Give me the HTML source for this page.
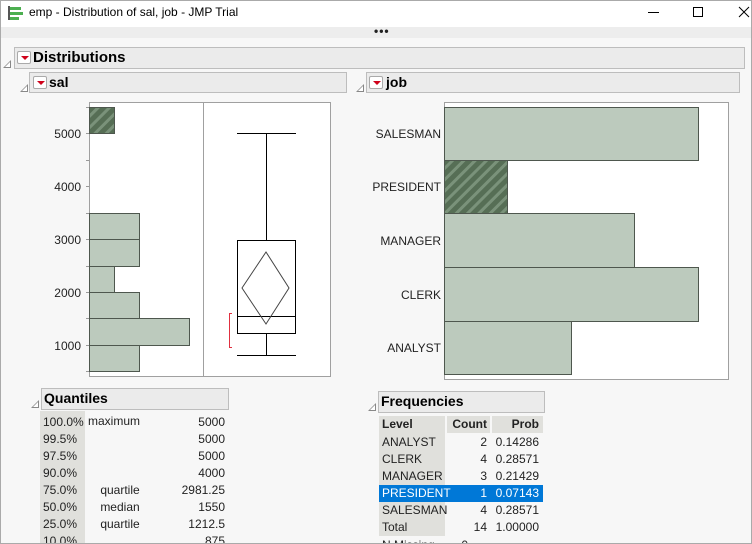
<!DOCTYPE html>
<html><head><style>
*{margin:0;padding:0;box-sizing:border-box}
html,body{width:752px;height:544px;overflow:hidden}
body{background:#f7f7f7;font-family:"Liberation Sans",sans-serif;position:relative}
.a{position:absolute}
.t{font-size:12px;color:#222;white-space:nowrap}
.hdr{position:absolute;background:#ebebeb;border:1px solid #bdbdbd;font-weight:bold;color:#000}
.dd{position:absolute;width:14px;height:13px;border:1px solid #aaa;background:#fff;border-radius:2px}
.dd:after{content:"";position:absolute;left:3px;top:4px;border-left:4px solid transparent;border-right:4px solid transparent;border-top:4px solid #d0021b}
.tri{position:absolute;width:0;height:0;border-left:8px solid transparent;border-bottom:8px solid #888}
.tri:after{content:"";position:absolute;left:-6px;top:2px;border-left:5px solid transparent;border-bottom:5px solid #fff}
</style></head><body>
<div class="a" style="left:0;top:0;width:752px;height:544px;border:1px solid #aaa"></div>
<div class="a" style="left:1px;top:1px;width:750px;height:26px;background:#fff"></div>
<div class="a" style="left:8px;top:6px;width:2px;height:14px;background:#555"></div>
<div class="a" style="left:10px;top:7px;width:11px;height:3px;background:#4caf50"></div>
<div class="a" style="left:10px;top:12px;width:13px;height:3px;background:#4caf50"></div>
<div class="a" style="left:10px;top:17px;width:9px;height:3px;background:#4caf50"></div>
<div class="a t" style="left:29px;top:5px;font-size:12px;color:#000">emp - Distribution of sal, job - JMP Trial</div>
<div class="a" style="left:648px;top:12px;width:11px;height:1px;background:#000"></div>
<div class="a" style="left:693px;top:7px;width:10px;height:10px;border:1px solid #000"></div>
<svg class="a" style="left:738px;top:6px" width="12" height="12"><path d="M1 1L11 11M11 1L1 11" stroke="#000" stroke-width="1"/></svg>
<div class="a" style="left:1px;top:27px;width:750px;height:11px;background:#ededed"></div>
<div class="a t" style="left:374px;top:24px;font-size:12px;font-weight:bold;letter-spacing:1px">•••</div>

<div class="tri" style="left:3px;top:60px"></div>
<div class="hdr" style="left:14px;top:47px;width:731px;height:22px"></div>
<div class="dd" style="left:17px;top:51px"></div>
<div class="a" style="left:33px;top:49px;font-size:15px;font-weight:bold">Distributions</div>

<div class="tri" style="left:20px;top:84px"></div>
<div class="hdr" style="left:29px;top:72px;width:318px;height:21px"></div>
<div class="dd" style="left:33px;top:76px"></div>
<div class="a" style="left:49px;top:74px;font-size:14px;font-weight:bold">sal</div>

<div class="tri" style="left:356px;top:84px"></div>
<div class="hdr" style="left:366px;top:72px;width:374px;height:21px"></div>
<div class="dd" style="left:369px;top:76px"></div>
<div class="a" style="left:386px;top:74px;font-size:14px;font-weight:bold">job</div>

<svg class="a" style="left:0;top:0" width="752" height="544">
<defs><pattern id="h" width="8" height="8" patternUnits="userSpaceOnUse" patternTransform="rotate(45)"><rect width="8" height="8" fill="#566e55"/><rect width="3" height="8" fill="#7a927a"/></pattern></defs>
<rect x="89.5" y="102.5" width="241" height="274" fill="#fff" stroke="#a0a0a0"/>
<line x1="203.5" y1="102" x2="203.5" y2="376" stroke="#a0a0a0"/>
<g stroke="#4e574e" fill="#bccabd">
<rect x="89.5" y="107.5" width="25" height="26" fill="url(#h)"/>
<rect x="89.5" y="213.5" width="50" height="26"/>
<rect x="89.5" y="239.5" width="50" height="27"/>
<rect x="89.5" y="266.5" width="25" height="26"/>
<rect x="89.5" y="292.5" width="50" height="26"/>
<rect x="89.5" y="318.5" width="100" height="27"/>
<rect x="89.5" y="345.5" width="50" height="26"/>
</g>
<g stroke="#999">
<line x1="86" y1="107.5" x2="89" y2="107.5"/><line x1="86" y1="133.5" x2="89" y2="133.5"/><line x1="86" y1="160.5" x2="89" y2="160.5"/><line x1="86" y1="186.5" x2="89" y2="186.5"/><line x1="86" y1="213.5" x2="89" y2="213.5"/><line x1="86" y1="239.5" x2="89" y2="239.5"/><line x1="86" y1="266.5" x2="89" y2="266.5"/><line x1="86" y1="292.5" x2="89" y2="292.5"/><line x1="86" y1="318.5" x2="89" y2="318.5"/><line x1="86" y1="345.5" x2="89" y2="345.5"/><line x1="86" y1="371.5" x2="89" y2="371.5"/>
</g>
<g font-family="Liberation Sans" font-size="12" fill="#222" text-anchor="end">
<text x="81" y="138">5000</text><text x="81" y="191">4000</text><text x="81" y="244">3000</text><text x="81" y="297">2000</text><text x="81" y="350">1000</text>
</g>
<g stroke="#000" fill="none" stroke-width="1">
<line x1="237" y1="133.5" x2="296" y2="133.5"/><line x1="266.5" y1="133" x2="266.5" y2="240"/>
<rect x="237.5" y="240.5" width="58" height="93"/><line x1="237" y1="316.5" x2="296" y2="316.5"/>
<line x1="266.5" y1="334" x2="266.5" y2="355"/><line x1="237" y1="355.5" x2="296" y2="355.5"/>
<path d="M266 252L289 288L266 324L242 288Z" stroke="#444"/>
</g>
<path d="M232 313.5H229.5V347.5H232" stroke="#e03040" fill="none"/>

<rect x="444.5" y="102.5" width="284" height="277" fill="#fff" stroke="#a0a0a0"/>
<g stroke="#4e574e" fill="#bccabd">
<rect x="444.5" y="107.5" width="254" height="53"/>
<rect x="444.5" y="160.5" width="63" height="53" fill="url(#h)"/>
<rect x="444.5" y="213.5" width="190" height="54"/>
<rect x="444.5" y="267.5" width="254" height="54"/>
<rect x="444.5" y="321.5" width="127" height="53"/>
</g>
<g font-family="Liberation Sans" font-size="12" fill="#222" text-anchor="end">
<text x="441" y="138">SALESMAN</text><text x="441" y="191">PRESIDENT</text><text x="441" y="245">MANAGER</text><text x="441" y="299">CLERK</text><text x="441" y="352">ANALYST</text>
</g>
</svg>

<div class="tri" style="left:31px;top:400px"></div>
<div class="hdr" style="left:41px;top:388px;width:188px;height:22px"></div>
<div class="a" style="left:44px;top:390px;font-size:14px;font-weight:bold">Quantiles</div>
<div class="a" style="left:40px;top:411px;width:45px;height:132px;background:#e0e0dc"></div>
<div class="a t" style="left:43px;top:414px;line-height:17px">100.0%<br>99.5%<br>97.5%<br>90.0%<br>75.0%<br>50.0%<br>25.0%<br>10.0%</div>
<div class="a t" style="left:88px;top:414px">maximum</div>
<div class="a t" style="left:95px;top:482px;line-height:17px;width:50px;text-align:center">quartile<br>median<br>quartile</div>
<div class="a t" style="left:160px;top:414px;line-height:17px;width:65px;text-align:right">5000<br>5000<br>5000<br>4000<br>2981.25<br>1550<br>1212.5<br>875</div>

<div class="tri" style="left:368px;top:403px"></div>
<div class="hdr" style="left:378px;top:391px;width:167px;height:22px"></div>
<div class="a" style="left:381px;top:393px;font-size:14px;font-weight:bold">Frequencies</div>
<div class="a" style="left:379px;top:416px;width:66px;height:17px;background:#e0e0dc"></div>
<div class="a" style="left:447px;top:416px;width:43px;height:17px;background:#e0e0dc"></div>
<div class="a" style="left:492px;top:416px;width:51px;height:17px;background:#e0e0dc"></div>
<div class="a" style="left:379px;top:433px;width:66px;height:103px;background:#e0e0dc"></div>
<div class="a" style="left:379px;top:485px;width:164px;height:17px;background:#0078d7"></div>
<div class="a t" style="left:382px;top:417px;font-weight:bold">Level</div>
<div class="a t" style="left:447px;top:417px;width:40px;text-align:right;font-weight:bold">Count</div>
<div class="a t" style="left:492px;top:417px;width:47px;text-align:right;font-weight:bold">Prob</div>
<div class="a t" style="left:382px;top:434px;line-height:17px">ANALYST<br>CLERK<br>MANAGER<br><span style="color:#fff">PRESIDENT</span><br>SALESMAN<br>Total</div>
<div class="a t" style="left:447px;top:434px;line-height:17px;width:40px;text-align:right">2<br>4<br>3<br><span style="color:#fff">1</span><br>4<br>14</div>
<div class="a t" style="left:492px;top:434px;line-height:17px;width:47px;text-align:right">0.14286<br>0.28571<br>0.21429<br><span style="color:#fff">0.07143</span><br>0.28571<br>1.00000</div>
<div class="a" style="left:0;top:538px;width:752px;height:6px;overflow:hidden"><div class="a t" style="left:382px;top:0px">N Missing&nbsp;&nbsp;&nbsp;&nbsp;&nbsp;&nbsp;&nbsp;&nbsp;0</div></div>
<div class="a" style="left:0;top:543px;width:752px;height:1px;background:#aaa"></div>
</body></html>
